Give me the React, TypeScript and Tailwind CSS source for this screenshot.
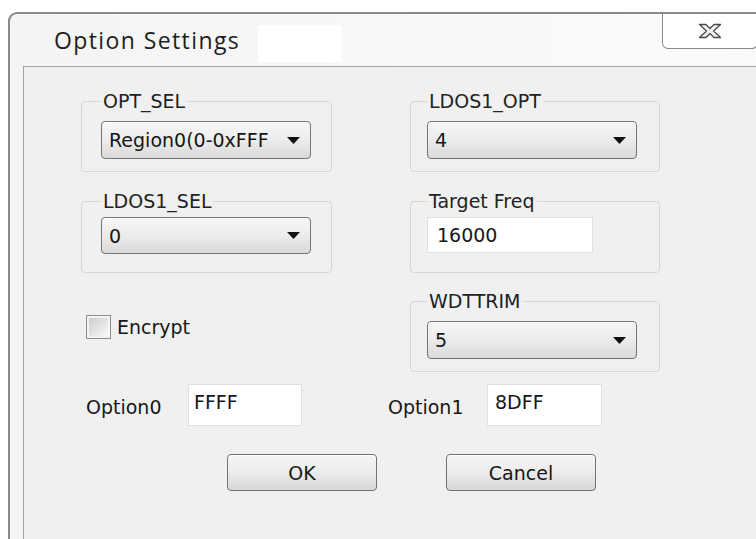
import type { ReactNode } from 'react'

const ui = "font-['DejaVu_Sans',sans-serif] text-[19px] text-[#161616]"

function Arrow() {
  return (
    <svg width="13" height="7" viewBox="0 0 13 7" className="shrink-0">
      <path d="M0 0h13L6.5 7z" fill="#111" />
    </svg>
  )
}

function Combo({ value, height = 'h-[38px]' }: { value: string; height?: string }) {
  return (
    <div
      className={`flex w-[210px] ${height} items-center justify-between rounded-[4px] border border-[#747474] bg-gradient-to-b from-[#f7f7f7] via-[#ececec] to-[#d9d9d9] pl-[7px] pr-[10px] shadow-[inset_0_1px_0_#fff]`}
    >
      <span className="w-[160px] overflow-hidden whitespace-nowrap leading-[24px]">{value}</span>
      <Arrow />
    </div>
  )
}

function Group({ label, className, children }: { label: string; className: string; children: ReactNode }) {
  return (
    <fieldset className={`rounded-[4px] border border-[#d6d6d6] ${className}`}>
      <legend className="px-[2px] leading-[22px] text-[#222]">{label}</legend>
      {children}
    </fieldset>
  )
}

function Field({ value, className }: { value: string; className: string }) {
  return (
    <div className={`border border-[#e0e0e0] bg-white leading-[22px] ${className}`}>{value}</div>
  )
}

function Button({ children }: { children: ReactNode }) {
  return (
    <button className="flex h-[37px] w-[150px] items-center justify-center rounded-[4px] border border-[#727272] bg-gradient-to-b from-[#f6f6f6] via-[#ebebeb] to-[#d8d8d8] leading-[22px] shadow-[inset_0_1px_0_#fff]">
      {children}
    </button>
  )
}

export default function App() {
  return (
    <div className={`h-[539px] w-[756px] overflow-hidden bg-white pl-[8px] pt-[12px] ${ui}`}>
      <div className="flex h-[540px] w-[760px] flex-col rounded-tl-[9px] border-l-2 border-t-2 border-[#8a8a8a] bg-gradient-to-r from-[#f4f4f4] to-[#fbfbfb]">
        {/* title bar */}
        <div className="flex h-[52px] shrink-0 items-center">
          <span className="w-[248px] whitespace-nowrap pl-[44px] font-['Open_Sans',sans-serif] text-[23px] tracking-[1.4px] text-[#1e1e1e]">
            Option Settings
          </span>
          <div className="mb-[4px] h-[37px] w-[84px] self-end bg-white" />
          <div className="mr-[10px] ml-auto flex h-[35px] w-[96px] items-center justify-center self-start rounded-b-[6px] border-x border-b border-[#8a8a8a] bg-white">
            <svg width="24" height="16" viewBox="0 0 24 16">
              <path
                d="M1.5 1.5h6.5l4 4 4-4h6.5l-7 6.5 7 6.5h-6.5l-4-4-4 4h-6.5l7-6.5z"
                fill="#f2f2f2"
                stroke="#4a4a4a"
                strokeWidth="1.3"
                strokeLinejoin="round"
              />
            </svg>
          </div>
        </div>

        {/* client area */}
        <div className="mr-[10px] ml-[13px] flex-1 border-x border-t border-[#a2a2a2] bg-[#f0f0f0] pl-[57px] pt-[23px]">
          <div className="grid grid-cols-[329px_250px] gap-y-[18px]">
            <Group label="OPT_SEL" className="w-[251px] pl-[19px] pt-[9px] pb-[12px]">
              <Combo value="Region0(0-0xFFFF)" />
            </Group>
            <Group label="LDOS1_OPT" className="w-[250px] pl-[16px] pt-[9px] pb-[12px]">
              <Combo value="4" />
            </Group>

            <Group label="LDOS1_SEL" className="w-[251px] pl-[19px] pt-[5px] pb-[17px]">
              <Combo value="0" height="h-[37px]" />
            </Group>
            <Group label="Target Freq" className="w-[250px] pl-[16px] pt-[5px] pb-[19px]">
              <Field value="16000" className="flex h-[36px] w-[166px] items-center pl-[9px]" />
            </Group>
          </div>

          <div className="mt-[17px] grid grid-cols-[329px_250px]">
            <label className="mt-[25px] ml-[5px] flex items-center gap-[6px] self-start">
              <span className="h-[24px] w-[25px] border border-[#8e8e8e] bg-[#f4f4f4] p-[2px]">
                <span className="block h-full w-full bg-gradient-to-br from-[#cdcdcd] to-[#f8f8f8]" />
              </span>
              <span className="leading-[22px]">Encrypt</span>
            </label>
            <Group label="WDTTRIM" className="w-[250px] pl-[16px] pt-[9px] pb-[12px]">
              <Combo value="5" />
            </Group>
          </div>

          <div className="mt-[12px] flex items-center pl-[5px]">
            <span className="w-[102px] pt-[4px] leading-[22px]">Option0</span>
            <Field value="FFFF" className="h-[42px] w-[114px] pl-[5px] pt-[6px]" />
            <span className="ml-[86px] w-[99px] pt-[4px] leading-[22px]">Option1</span>
            <Field value="8DFF" className="h-[42px] w-[115px] pl-[7px] pt-[6px]" />
          </div>

          <div className="mt-[28px] flex gap-[69px] pl-[146px]">
            <Button>OK</Button>
            <Button>Cancel</Button>
          </div>
        </div>
      </div>
    </div>
  )
}
